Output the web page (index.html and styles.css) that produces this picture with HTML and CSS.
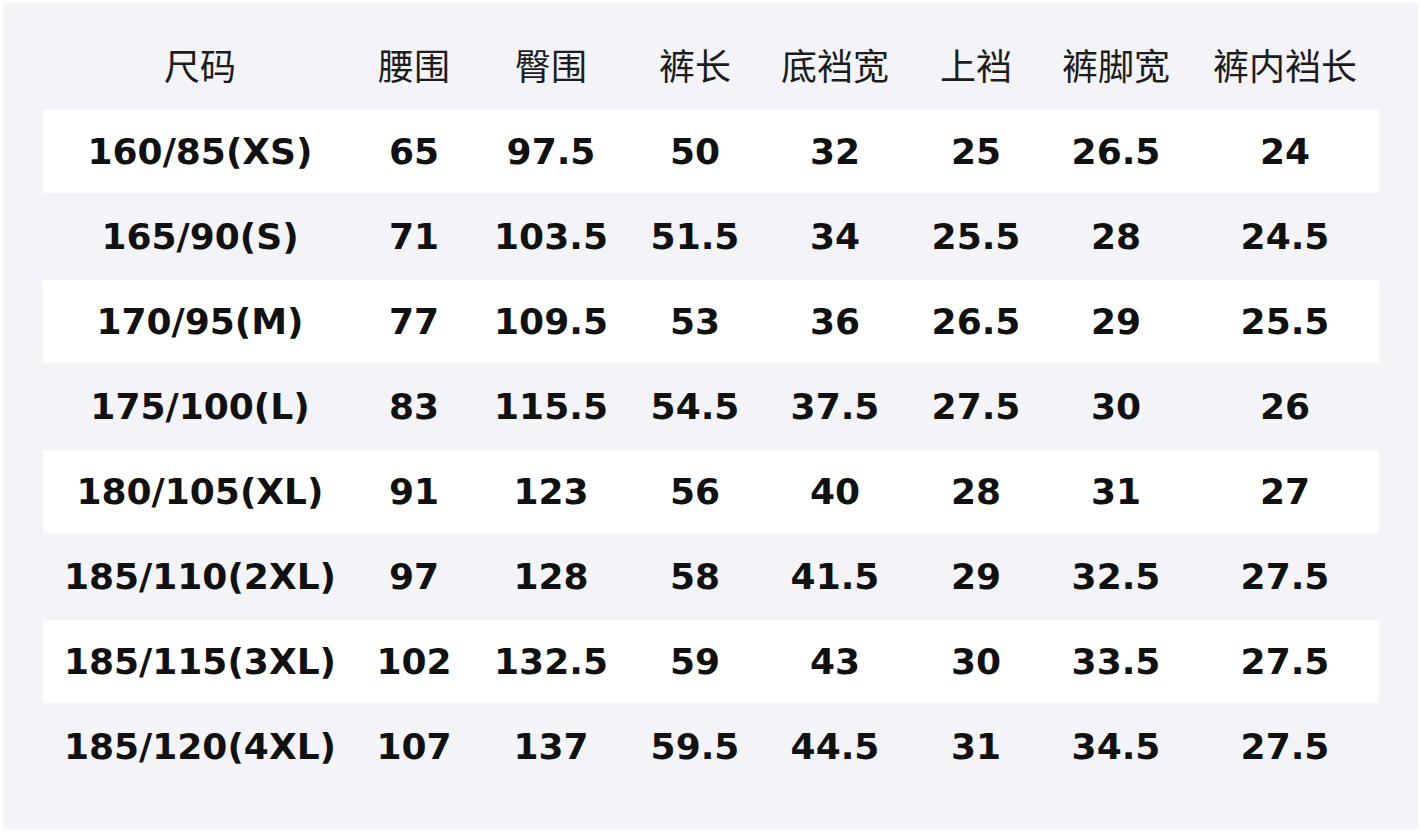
FILE: index.html
```html
<!DOCTYPE html>
<html lang="zh">
<head>
<meta charset="utf-8">
<link rel="stylesheet" href="styles.css">
</head>
<body>
<div class="panel">
  <div class="grid">
    <div class="row head"><div>尺码</div><div>腰围</div><div>臀围</div><div>裤长</div><div>底裆宽</div><div>上裆</div><div>裤脚宽</div><div>裤内裆长</div></div>
    <div class="row w"><div>160/85(XS)</div><div>65</div><div>97.5</div><div>50</div><div>32</div><div>25</div><div>26.5</div><div>24</div></div>
    <div class="row"><div>165/90(S)</div><div>71</div><div>103.5</div><div>51.5</div><div>34</div><div>25.5</div><div>28</div><div>24.5</div></div>
    <div class="row w"><div>170/95(M)</div><div>77</div><div>109.5</div><div>53</div><div>36</div><div>26.5</div><div>29</div><div>25.5</div></div>
    <div class="row"><div>175/100(L)</div><div>83</div><div>115.5</div><div>54.5</div><div>37.5</div><div>27.5</div><div>30</div><div>26</div></div>
    <div class="row w"><div>180/105(XL)</div><div>91</div><div>123</div><div>56</div><div>40</div><div>28</div><div>31</div><div>27</div></div>
    <div class="row"><div>185/110(2XL)</div><div>97</div><div>128</div><div>58</div><div>41.5</div><div>29</div><div>32.5</div><div>27.5</div></div>
    <div class="row w"><div>185/115(3XL)</div><div>102</div><div>132.5</div><div>59</div><div>43</div><div>30</div><div>33.5</div><div>27.5</div></div>
    <div class="row"><div>185/120(4XL)</div><div>107</div><div>137</div><div>59.5</div><div>44.5</div><div>31</div><div>34.5</div><div>27.5</div></div>
  </div>
</div>
</body>
</html>
```
FILE: styles.css
```css
html, body {
  margin: 0;
  padding: 0;
  background: #ffffff;
}
.panel {
  margin: 3px 4px 4px 3px;
  height: 826px;
  box-sizing: border-box;
  background: #f3f3f8;
  padding: 22px 39px 0 40px;
}
.grid {
  display: flex;
  flex-direction: column;
  gap: 2px;
}
.row {
  display: grid;
  grid-template-columns: 314px 114px 160px 128px 152px 130px 150px 188px;
  height: 83px;
  align-items: center;
  font-family: "DejaVu Sans", "Noto Sans CJK SC", sans-serif;
  font-weight: bold;
  font-size: 36px;
  color: #111111;
}
.row > div {
  text-align: center;
  white-space: nowrap;
}
.row.w {
  background: #ffffff;
}
.row.head {
  font-family: "Noto Sans CJK SC", sans-serif;
  font-weight: normal;
  font-size: 36px;
  color: #1c1c1c;
  padding-bottom: 6px;
  box-sizing: border-box;
}
```
